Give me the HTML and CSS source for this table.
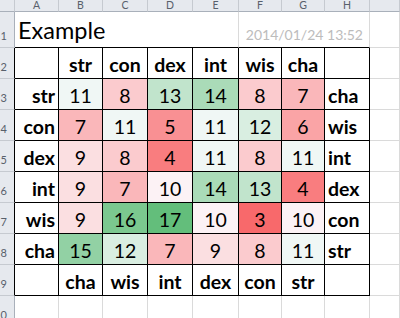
FILE: index.html
```html
<!DOCTYPE html>
<html>
<head>
<meta charset="utf-8">
<link rel="stylesheet" href="styles.css">
</head>
<body>
<div class="sheet">
  <div class="ch"></div><div class="ch">A</div><div class="ch">B</div><div class="ch">C</div><div class="ch">D</div><div class="ch">E</div><div class="ch">F</div><div class="ch">G</div><div class="ch">H</div><div class="ch"></div>

  <div class="rh">1</div><div class="m title">Example</div><div class="m date">2014/01/24 13:52</div><div></div>

  <div class="rh tb">2</div><div class="t"></div><div class="t cell lc">str</div><div class="t cell lc">con</div><div class="t cell lc">dex</div><div class="t cell lc">int</div><div class="t cell lc">wis</div><div class="t cell lc">cha</div><div class="t"></div><div></div>

  <div class="rh tb">3</div><div class="t cell lr">str</div><div class="t cell n v11">11</div><div class="t cell n v8">8</div><div class="t cell n v13">13</div><div class="t cell n v14">14</div><div class="t cell n v8">8</div><div class="t cell n v7">7</div><div class="t cell ll">cha</div><div></div>

  <div class="rh tb">4</div><div class="t cell lr">con</div><div class="t cell n v7">7</div><div class="t cell n v11">11</div><div class="t cell n v5">5</div><div class="t cell n v11">11</div><div class="t cell n v12">12</div><div class="t cell n v6">6</div><div class="t cell ll">wis</div><div></div>

  <div class="rh tb">5</div><div class="t cell lr">dex</div><div class="t cell n v9">9</div><div class="t cell n v8">8</div><div class="t cell n v4">4</div><div class="t cell n v11">11</div><div class="t cell n v8">8</div><div class="t cell n v11">11</div><div class="t cell ll">int</div><div></div>

  <div class="rh tb">6</div><div class="t cell lr">int</div><div class="t cell n v9">9</div><div class="t cell n v7">7</div><div class="t cell n v10">10</div><div class="t cell n v14">14</div><div class="t cell n v13">13</div><div class="t cell n v4">4</div><div class="t cell ll">dex</div><div></div>

  <div class="rh tb">7</div><div class="t cell lr">wis</div><div class="t cell n v9">9</div><div class="t cell n v16">16</div><div class="t cell n v17">17</div><div class="t cell n v10">10</div><div class="t cell n v3">3</div><div class="t cell n v10">10</div><div class="t cell ll">con</div><div></div>

  <div class="rh tb">8</div><div class="t cell lr">cha</div><div class="t cell n v15">15</div><div class="t cell n v12">12</div><div class="t cell n v7">7</div><div class="t cell n v9">9</div><div class="t cell n v8">8</div><div class="t cell n v11">11</div><div class="t cell ll">str</div><div></div>

  <div class="rh tb">9</div><div class="t"></div><div class="t cell lc">cha</div><div class="t cell lc">wis</div><div class="t cell lc">int</div><div class="t cell lc">dex</div><div class="t cell lc">con</div><div class="t cell lc">str</div><div class="t"></div><div></div>

  <div class="rh">10</div><div></div><div></div><div></div><div></div><div></div><div></div><div></div><div></div><div></div>
</div>
</body>
</html>
```

FILE: styles.css
```css
* { box-sizing: border-box; }
html, body { margin: 0; padding: 0; background: #fff; overflow: hidden; }
body { font-family: Lato, "Liberation Sans", sans-serif; color: #000; }

.sheet {
  display: grid;
  grid-template-columns: 15px 44px 44px 45px 45px 46px 43px 43px 45px 1fr;
  grid-template-rows: 12px 36px repeat(9, 31px);
  width: 400px;
}
.sheet > div {
  display: flex;
  min-width: 0;
  white-space: nowrap;
  border-right: 1px solid #dadada;
  border-bottom: 1px solid #dadada;
}

.sheet > .ch {
  background: #e6e9ee;
  border-right-color: #c6cad0;
  border-bottom-color: #a9b0ba;
  color: #58606b;
  font-size: 10.5px;
  line-height: 11px;
  justify-content: center;
}
.sheet > .rh {
  background: #e6e9ee;
  border-right-color: #a9b0ba;
  border-bottom-color: #c6cad0;
  color: #58606b;
  font-size: 11px;
  justify-content: flex-end;
  align-items: flex-end;
  padding: 0 7px 5px 0;
  overflow: hidden;
}
.sheet > .rh.tb { border-right-color: #000; }

.sheet > .m { border-bottom-color: #000; }
.title {
  grid-column: span 5;
  align-items: flex-end;
  font-size: 23.5px;
  padding: 0 0 3px 3px;
}
.date {
  grid-column: span 3;
  justify-content: flex-end;
  align-items: flex-end;
  font-size: 14px;
  color: #bcbcbc;
  padding: 0 6px 4px 0;
}

.sheet > .t { border-color: #000; }
.cell {
  align-items: flex-end;
  font-size: 19.5px;
  padding-bottom: 2px;
}
.n { justify-content: center; }
.lc { justify-content: center; font-weight: 700; }
.lr { justify-content: flex-end; font-weight: 700; padding-right: 3px; }
.ll { justify-content: flex-start; font-weight: 700; padding-left: 3px; }

.v3 { background: #f8696b; }
.v4 { background: #f97d7f; }
.v5 { background: #f99093; }
.v6 { background: #faa4a6; }
.v7 { background: #fab7ba; }
.v8 { background: #fbcbce; }
.v9 { background: #fbdfe1; }
.v10 { background: #fcf2f5; }
.v11 { background: #f0f7f5; }
.v12 { background: #d9eee1; }
.v13 { background: #c1e4cc; }
.v14 { background: #aadbb8; }
.v15 { background: #92d1a4; }
.v16 { background: #7bc88f; }
.v17 { background: #63be7b; }
```
